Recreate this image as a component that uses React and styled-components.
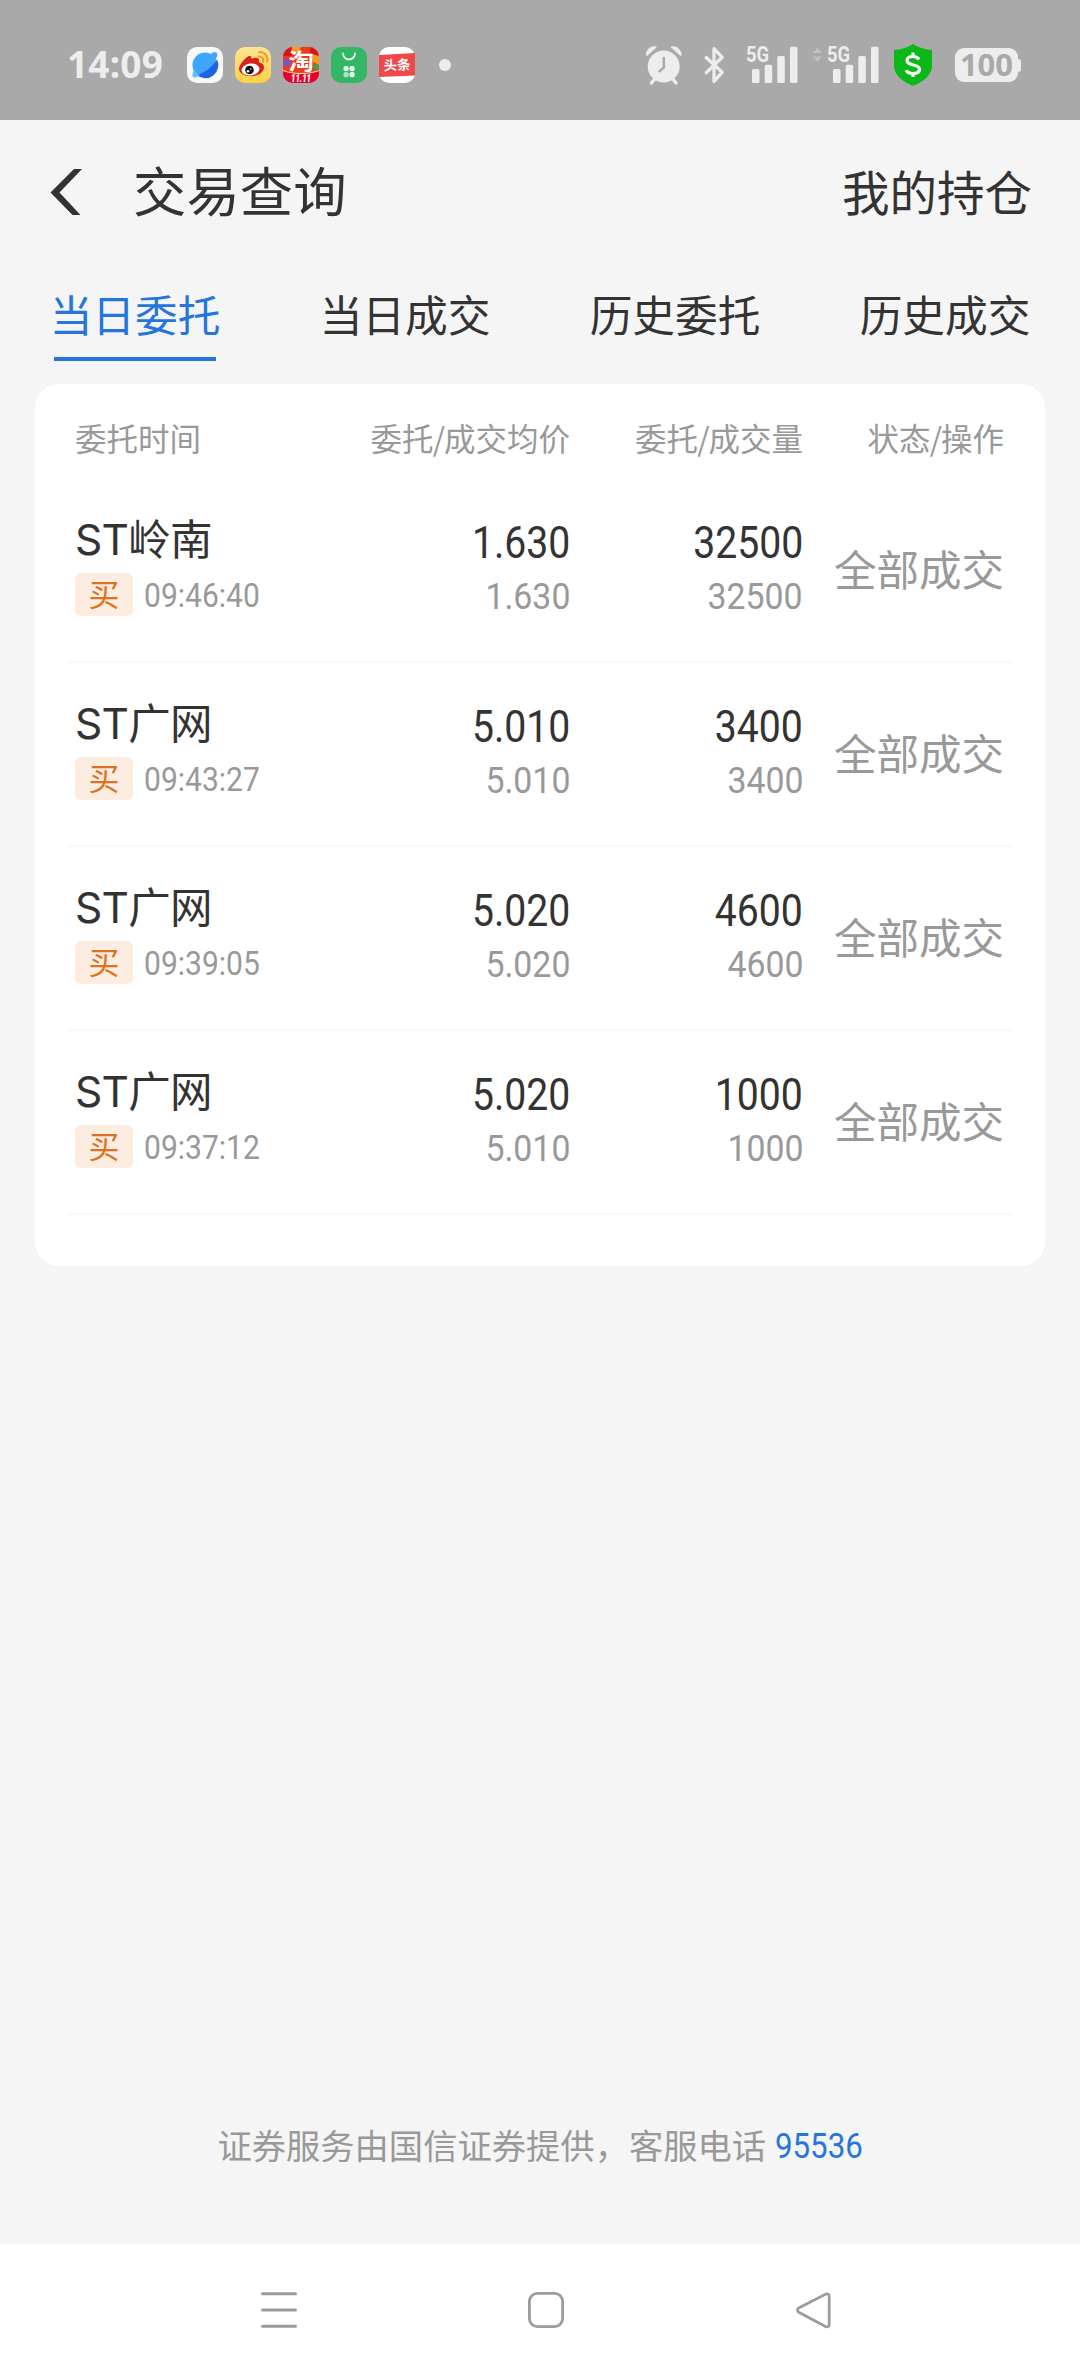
import React from "react"
import styled, { createGlobalStyle } from "styled-components"

const GlobalStyle = createGlobalStyle`
  * {
    box-sizing: border-box;
  }
  body {
    margin: 0;
    background: #f5f5f5;
    color: #333;
    font-family: "Noto Sans CJK SC", sans-serif;
  }
`

const Page = styled.div`
  display: flex;
  flex-direction: column;
  width: 1080px;
  height: 2376px;
  background: #f5f5f5;
`

const StatusBar = styled.header`
  display: flex;
  align-items: center;
  justify-content: space-between;
  height: 120px;
  padding: 10px 59px 0 67px;
  background: #a9a9a9;
`

const StatusGroup = styled.div`
  display: flex;
  align-items: center;
`

const Clock = styled.span`
  width: 120px;
  padding-bottom: 2px;
  color: #ededed;
  font: 700 37px/40px "Noto Sans", sans-serif;
  letter-spacing: 0.2px;
  white-space: nowrap;
`

const AppIcon = styled.svg`
  display: block;
  width: 36px;
  height: 36px;
  margin-right: 12px;
  overflow: visible;
`

const MoreDot = styled.span`
  width: 12px;
  height: 12px;
  margin-left: 12px;
  border-radius: 50%;
  background: #ededed;
`

const StatusIcon = styled.svg`
  display: block;
  flex: none;
  margin-left: ${({ $gap }) => $gap || 0}px;
  overflow: visible;
`

const Battery = styled.span`
  display: flex;
  align-items: center;
  margin-left: 23px;
  &::after {
    content: "";
    width: 3px;
    height: 13px;
    border-radius: 0 3px 3px 0;
    background: #ededed;
  }
`

const BatteryLevel = styled.span`
  width: 63px;
  height: 34px;
  border-radius: 9px;
  background: #ededed;
  color: #a9a9a9;
  font: 700 31px/33px "Noto Sans", sans-serif;
  text-align: center;
`

const NavBar = styled.div`
  display: flex;
  align-items: center;
  height: 136px;
  padding: 0 48px 0 50px;
`

const BackIcon = styled.svg`
  display: block;
  margin: 8px 51px 0 0;
`

const Title = styled.h1`
  flex: 1;
  margin: 1px 0 0;
  font-size: 53.4px;
  font-weight: 400;
  line-height: 80px;
`

const NavLink = styled.a`
  margin-top: 6px;
  font-size: 47.5px;
  line-height: 70px;
`

const Tabs = styled.nav`
  display: flex;
  height: 128px;
  padding-top: 27px;
`

const Tab = styled.div`
  flex: 1;
  display: flex;
  flex-direction: column;
  align-items: center;
  color: ${({ $active }) => ($active ? "#2475dd" : "#333")};
  font-size: 42.7px;
  line-height: 60px;
  &::after {
    content: "";
    width: 162px;
    height: 4px;
    margin-top: 14px;
    background: ${({ $active }) => ($active ? "#2475dd" : "transparent")};
  }
`

const Card = styled.section`
  height: 882px;
  margin: 0 35px;
  padding: 0 34px;
  border-radius: 24px;
  background: #fff;
`

const Row = styled.div`
  display: grid;
  grid-template-columns: 260px 235px 233px 201px;
  padding: 0 7px 0 6px;
`

const HeadRow = styled(Row)`
  height: 95px;
  padding-top: 11px;
  align-items: center;
  color: #999;
  font-size: 31.5px;
  line-height: 46px;
`

const HeadCell = styled.span`
  text-align: ${({ $left }) => ($left ? "left" : "right")};
  white-space: nowrap;
`

const Slash = styled.span`
  margin: 0 -1px;
`

const OrderRow = styled(Row)`
  height: 184px;
  border-bottom: 2px solid #f8f8f8;
`

const Stock = styled.div`
  padding-top: 35px;
`

const Name = styled.div`
  font-family: Inter, "Noto Sans CJK SC", sans-serif;
  font-size: 42.5px;
  letter-spacing: -0.7px;
  line-height: 52px;
  white-space: nowrap;
`

const Meta = styled.div`
  display: flex;
  align-items: center;
  margin-top: 7px;
`

const Side = styled.span`
  width: 58px;
  height: 43px;
  margin-right: 11px;
  border-radius: 6px;
  background: #fdede0;
  color: #dd7322;
  font-size: 31px;
  line-height: 40px;
  text-align: center;
`

// Roboto squeezed to the proportions of a DIN face
const Digits = styled.span`
  display: inline-block;
  font-family: Roboto, sans-serif;
  transform: scaleX(${({ $squeeze }) => $squeeze || 0.9});
  transform-origin: ${({ $end }) => ($end ? "right" : "left")};
`

const Time = styled(Digits)`
  margin-top: 2px;
  color: #999;
  font-size: 32.3px;
`

const Figures = styled.div`
  display: flex;
  flex-direction: column;
  align-items: flex-end;
  gap: 4px;
  padding-top: 39px;
`

const Ordered = styled(Digits)`
  font-size: 43.5px;
  line-height: 52px;
`

const Filled = styled(Digits)`
  color: #999;
  font-size: 37.6px;
  line-height: 44px;
`

const State = styled.div`
  align-self: center;
  margin-top: -5px;
  color: #999;
  font-size: 42.5px;
  line-height: 60px;
  text-align: right;
  white-space: nowrap;
`

const Footer = styled.footer`
  display: flex;
  align-items: center;
  justify-content: center;
  height: 52px;
  margin: auto 0 74px;
  color: #999;
  font-size: 34.3px;
  line-height: 52px;
`

const Phone = styled(Digits)`
  margin: 3px -10px 0 9px;
  color: #2475dd;
  font-size: 34.7px;
`

const SystemNav = styled.nav`
  display: flex;
  align-items: center;
  justify-content: space-between;
  height: 132px;
  padding: 0 248px 0 260px;
  background: #fff;
`

const tabs = ["当日委托", "当日成交", "历史委托", "历史成交"]

const columns = [["委托时间"], ["委托", "成交均价"], ["委托", "成交量"], ["状态", "操作"]]

const orders = [
  { name: "ST岭南", time: "09:46:40", price: "1.630", avg: "1.630", qty: "32500" },
  { name: "ST广网", time: "09:43:27", price: "5.010", avg: "5.010", qty: "3400" },
  { name: "ST广网", time: "09:39:05", price: "5.020", avg: "5.020", qty: "4600" },
  { name: "ST广网", time: "09:37:12", price: "5.020", avg: "5.010", qty: "1000" },
]

function BrowserIcon() {
  return (
    <AppIcon viewBox="0 0 36 36">
      <rect width="36" height="36" rx="10" fill="#f7f8fa" />
      <circle cx="18" cy="18" r="12.500" fill="#3da5fb" />
      <path d="M30 12.500A13 13 0 0 1 10 28.200C18 25.500 25.500 20 30 12.500z" fill="#1f62e6" />
      <path d="M24 6.500c3-2 6-1.500 6.300.3.300 2-.8 3.800-2.300 5.700z" fill="#3da5fb" />
      <path d="M6.500 24c-1.500 3-1.500 6 .5 6.500 2 .3 4-1 5.500-2z" fill="#5cc3fd" />
    </AppIcon>
  )
}

function WeiboIcon() {
  return (
    <AppIcon viewBox="0 0 36 36">
      <linearGradient id="weibo" x2="0" y2="1">
        <stop stopColor="#fde594" />
        <stop offset="1" stopColor="#fdd23f" />
      </linearGradient>
      <rect width="36" height="36" rx="10" fill="url(#weibo)" />
      <path
        d="M4 22c0-4 5-10 9-12.500 2.500-1.300 4 .2 3.500 2.500 3-1.500 7-2 7.500 1 .2 1-.2 1.800 0 2.200 3 .8 5 2.300 5 5 0 5-6 9-13 9S4 26 4 22z"
        fill="#d8201f"
      />
      <ellipse cx="15.500" cy="22.500" rx="9" ry="6" fill="#fff" transform="rotate(-8 15.500 22.500)" />
      <circle cx="14.500" cy="23" r="4.300" fill="#111" />
      <circle cx="13" cy="24.300" r="1.200" fill="#fff" />
      <circle cx="15.800" cy="22" r=".7" fill="#fff" />
      <path d="M23.500 9.500c3-.5 5.500 2 4.700 5.200M24 5.200c5-.8 9.500 3.600 8.200 9.500" stroke="#f0982b" strokeWidth="2" fill="none" strokeLinecap="round" />
    </AppIcon>
  )
}

function TaobaoIcon() {
  return (
    <AppIcon viewBox="0 0 36 36">
      <clipPath id="taobao">
        <rect width="36" height="36" rx="10" />
      </clipPath>
      <g clipPath="url(#taobao)">
        <rect width="36" height="36" fill="#ee3a1c" />
        <path d="M0 0h9v9H0zM27 0h9v9h-9z" fill="#d5161b" />
        <path d="M9 0h9l-3 6-7-1zM29 7l7 2v9l-6-3z" fill="#f79a1e" />
        <circle cx="4" cy="15.500" r="3.500" fill="#6a5bd0" />
        <circle cx="33" cy="20" r="3" fill="#45a04c" />
        <path d="M0 24c10 4 26 4 36 0v12H0z" fill="#e6002d" />
        <path d="M0 23.500c10 4 26 4 36 0" stroke="#ffd9b0" strokeWidth="1" fill="none" />
      </g>
      <text x="5.500" y="21.500" fontSize="22" fontWeight="700" fill="#fff" fontFamily="Noto Sans CJK SC" textLength="25.500" lengthAdjust="spacingAndGlyphs">
        淘
      </text>
      <text x="8" y="35" fontSize="10.500" fontWeight="900" fontStyle="italic" fill="#fff" fontFamily="Roboto" textLength="20" lengthAdjust="spacingAndGlyphs">
        11.11
      </text>
    </AppIcon>
  )
}

function MarketIcon() {
  return (
    <AppIcon viewBox="0 0 36 36">
      <rect width="36" height="36" rx="10" fill="#34b765" />
      <path d="M12 6.500a6 6 0 0 0 12 0" stroke="#e9fbef" strokeWidth="1.800" fill="none" strokeLinecap="round" />
      <g fill="#dff7e6">
        <rect x="12.500" y="19" width="5.200" height="5.200" rx="2" />
        <rect x="18.500" y="19" width="5.200" height="5.200" rx="2" />
        <rect x="12.500" y="25" width="5.200" height="5.200" rx="2" fill="#a9e5bb" />
        <rect x="18.500" y="25" width="5.200" height="5.200" rx="2" />
      </g>
    </AppIcon>
  )
}

function ToutiaoIcon() {
  return (
    <AppIcon viewBox="0 0 36 36">
      <rect width="36" height="36" rx="10" fill="#fff" />
      <path d="M0 8l36-2v22.500L0 30z" fill="#f04848" />
      <text x="18" y="23" fontSize="13.500" fontWeight="700" fill="#fff" textAnchor="middle" fontFamily="Noto Sans CJK SC" transform="rotate(-2 18 18)">
        头条
      </text>
    </AppIcon>
  )
}

function Signal({ gap, arrows }) {
  return (
    <StatusIcon $gap={gap} width="66" height="40" viewBox="-14 0 66 40" fill="#ededed">
      {arrows && <path d="M-14 8l4.500-5.500L-5 8zM-14 11.500h9L-9.500 17z" fill="#c0c0c0" />}
      <text x="0" y="17" fontSize="22.500" fontWeight="700" fontFamily="Roboto" textLength="23" lengthAdjust="spacingAndGlyphs">
        5G
      </text>
      <rect x="6" y="24" width="7.500" height="14" rx="1.500" />
      <rect x="18.700" y="19.700" width="7.500" height="18.300" rx="1.500" />
      <rect x="31.300" y="11" width="7.500" height="27" rx="1.500" />
      <rect x="44" y="1.700" width="7.500" height="36.300" rx="1.500" />
    </StatusIcon>
  )
}

function App() {
  return (
    <Page>
      <GlobalStyle />
      <StatusBar>
        <StatusGroup>
          <Clock>14:09</Clock>
          <BrowserIcon />
          <WeiboIcon />
          <TaobaoIcon />
          <MarketIcon />
          <ToutiaoIcon />
          <MoreDot />
        </StatusGroup>
        <StatusGroup>
          {/* alarm */}
          <StatusIcon width="38" height="40" viewBox="0 0 38 40">
            <circle cx="18.700" cy="21.500" r="16" fill="#ededed" />
            <path d="M10.500 33l-4 5M27 33l4 5" stroke="#ededed" strokeWidth="3.500" strokeLinecap="round" />
            <path d="M.8 9.500C1.500 4 6.500.5 11 1.500c.8.200.7 1 .2 1.300L2.500 10.500c-.8.600-1.800 0-1.700-1zM36.700 9.500C36 4 31 .5 26.500 1.500c-.8.200-.7 1-.2 1.300l8.700 7.700c.8.600 1.800 0 1.700-1z" fill="#ededed" />
            <path d="M18.800 13v9.500l-4.300 3.800" stroke="#a9a9a9" strokeWidth="2.500" fill="none" strokeLinecap="round" strokeLinejoin="round" />
          </StatusIcon>
          {/* bluetooth */}
          <StatusIcon $gap={20} width="24" height="40" viewBox="0 0 24 40" fill="none" stroke="#ededed" strokeWidth="3.300" strokeLinecap="round" strokeLinejoin="round">
            <path d="M3.200 12.500l16 14.700L11 36.300V3.700l8.200 8.600L3.200 27.700" />
          </StatusIcon>
          <Signal gap={5} />
          <Signal gap={15} arrows />
          {/* shield */}
          <StatusIcon $gap={15} width="38" height="42" viewBox="0 0 38 42">
            <path d="M19 0c6 4 12 5.500 19 6v16c0 9-9 16-19 20C9 38 0 31 0 22V6C7 5.500 13 4 19 0z" fill="#0ab818" />
            <path d="M25 15.500c-1-2-3-3-6-3-3.500 0-6 1.500-6 4 0 6 12.500 3 12.500 8.800 0 2.800-2.500 4.200-6.500 4.200-3.500 0-6-1-7-3.300M19 8.500v5M19 28.500v4.500" stroke="#fff" strokeWidth="3.200" fill="none" />
          </StatusIcon>
          <Battery>
            <BatteryLevel>100</BatteryLevel>
          </Battery>
        </StatusGroup>
      </StatusBar>
      <NavBar>
        <BackIcon width="32" height="46" viewBox="0 0 32 46">
          <path d="M24 0h8L9.500 23.500 30.500 46h-8L.5 23.500z" fill="#333" />
        </BackIcon>
        <Title>交易查询</Title>
        <NavLink>我的持仓</NavLink>
      </NavBar>
      <Tabs>
        {tabs.map((tab, i) => (
          <Tab key={tab} $active={i === 0}>
            {tab}
          </Tab>
        ))}
      </Tabs>
      <Card>
        <HeadRow>
          {columns.map(([first, second], i) => (
            <HeadCell key={i} $left={i === 0}>
              {first}
              {second && <Slash>/</Slash>}
              {second}
            </HeadCell>
          ))}
        </HeadRow>
        {orders.map(({ name, time, price, avg, qty }) => (
          <OrderRow key={time}>
            <Stock>
              <Name>{name}</Name>
              <Meta>
                <Side>买</Side>
                <Time $squeeze={0.93}>{time}</Time>
              </Meta>
            </Stock>
            <Figures>
              <Ordered $end>{price}</Ordered>
              <Filled $end>{avg}</Filled>
            </Figures>
            <Figures>
              <Ordered $end>{qty}</Ordered>
              <Filled $end>{qty}</Filled>
            </Figures>
            <State>全部成交</State>
          </OrderRow>
        ))}
      </Card>
      <Footer>
        证券服务由国信证券提供，客服电话<Phone>95536</Phone>
      </Footer>
      <SystemNav>
        <svg width="38" height="38" viewBox="0 0 38 38" stroke="#9c9c9c" strokeWidth="3" strokeLinecap="round">
          <path d="M2.500 2.700h33M2.500 19h33M2.500 35.300h33" />
        </svg>
        <svg width="38" height="38" viewBox="0 0 38 38" fill="none" stroke="#9c9c9c" strokeWidth="2.800">
          <rect x="2.400" y="2.400" width="33.200" height="33.200" rx="8" />
        </svg>
        <svg width="38" height="38" viewBox="0 0 38 38" fill="none" stroke="#9c9c9c" strokeWidth="2.800">
          <path d="M31.500 3.200L4.700 16.900a2.500 2.500 0 0 0 0 4.300l26.800 14.200c1.800.9 3.700.1 3.700-2V5.200c0-2-1.900-2.900-3.700-2z" />
        </svg>
      </SystemNav>
    </Page>
  )
}

export default App
